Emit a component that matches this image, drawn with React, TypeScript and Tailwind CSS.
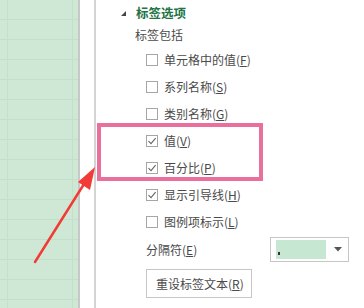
import React from "react";

const options = [
  { label: "单元格中的值", key: "F", checked: false },
  { label: "系列名称", key: "S", checked: false },
  { label: "类别名称", key: "G", checked: false },
  { label: "值", key: "V", checked: true },
  { label: "百分比", key: "P", checked: true },
  { label: "显示引导线", key: "H", checked: true },
  { label: "图例项标示", key: "L", checked: false },
];

function CheckBox({ checked }: { checked: boolean }) {
  return (
    <div className="w-[12px] h-[12px] border border-[#a6a6a6] bg-white flex items-center justify-center">
      {checked && (
        <svg width="10" height="10" viewBox="0 0 10 10">
          <path d="M1.5 5.2 L4 7.6 L8.6 2.2" fill="none" stroke="#666" strokeWidth="1.1" />
        </svg>
      )}
    </div>
  );
}

export default function App() {
  return (
    <div
      className="relative w-[364px] h-[308px] overflow-hidden bg-white flex text-[12px] text-[#4a4a4a]"
      style={{ fontFamily: '"Noto Sans CJK SC", "Noto Sans", sans-serif' }}
    >
      {/* sheet on the left */}
      <div className="w-[78px] h-full bg-[#cfe8d6] bg-[repeating-linear-gradient(to_bottom,transparent_0px,transparent_19px,#c2dfca_19px,#c2dfca_20px)] flex">
        <div className="ml-[7px] w-px h-full bg-[#c4e0cb]" />
        <div className="ml-auto mr-[5px] w-px h-full bg-[#c4e0cb]" />
      </div>
      <div className="w-[2px] h-full bg-[#c8c8c8]" />
      <div className="w-[14px] h-full bg-white" />
      <div className="w-[2px] h-full bg-[#d4d4d4]" />

      {/* format panel */}
      <div className="flex-1 flex flex-col pt-[3px]">
        <div className="h-[20px] flex items-center pl-[24px]">
          <svg width="7" height="7" viewBox="0 0 7 7" className="mr-[9px]">
            <path d="M6 1 L6 6 L1 6 Z" fill="#444" />
          </svg>
          <span className="text-[#217346] font-bold text-[12.5px]">标签选项</span>
        </div>
        <div className="h-[24px] flex items-center pl-[39px]">标签包括</div>
        <div className="flex flex-col pl-[50px] -mt-[1px]">
          {options.map((o) => (
            <div key={o.key} className="h-[27px] flex items-center gap-[6px]">
              <CheckBox checked={o.checked} />
              <span>
                {o.label}(<span className="underline">{o.key}</span>)
              </span>
            </div>
          ))}
        </div>
        <div className="h-[25px] mt-[2px] flex items-center pl-[50px]">
          <span className="w-[124px]">
            分隔符(<span className="underline">E</span>)
          </span>
          <div className="w-[79px] h-[25px] border border-[#c6c6c6] bg-white flex items-center pl-[5px] pr-[6px]">
            <div className="w-[50px] h-[19px] bg-[#c6e8d2] flex items-end pb-[4px] pl-[2px]">
              <span className="block w-[2px] h-[3px] bg-[#333]" />
            </div>
            <svg width="8" height="5" viewBox="0 0 8 5" className="ml-auto">
              <path d="M0 0 L8 0 L4 4.5 Z" fill="#555" />
            </svg>
          </div>
        </div>
        <div className="ml-[50px] mt-[7px] w-[106px] h-[29px] border border-[#c6c6c6] bg-white flex items-center pl-[9px]">
          重设标签文本(<span className="underline">R</span>)
        </div>
      </div>

      {/* annotation box */}
      <div className="absolute left-[97px] top-[123px] w-[166px] h-[58px] border-[4px] border-[#e9709c]" />

      {/* annotation arrow */}
      <svg className="absolute left-0 top-0" width="364" height="308" viewBox="0 0 364 308">
        <path d="M35 262 L84 184" stroke="#f23b36" strokeWidth="2.5" strokeLinecap="round" />
        <path d="M95 167 L90 190 L78 182 Z" fill="#f23b36" />
      </svg>
    </div>
  );
}
